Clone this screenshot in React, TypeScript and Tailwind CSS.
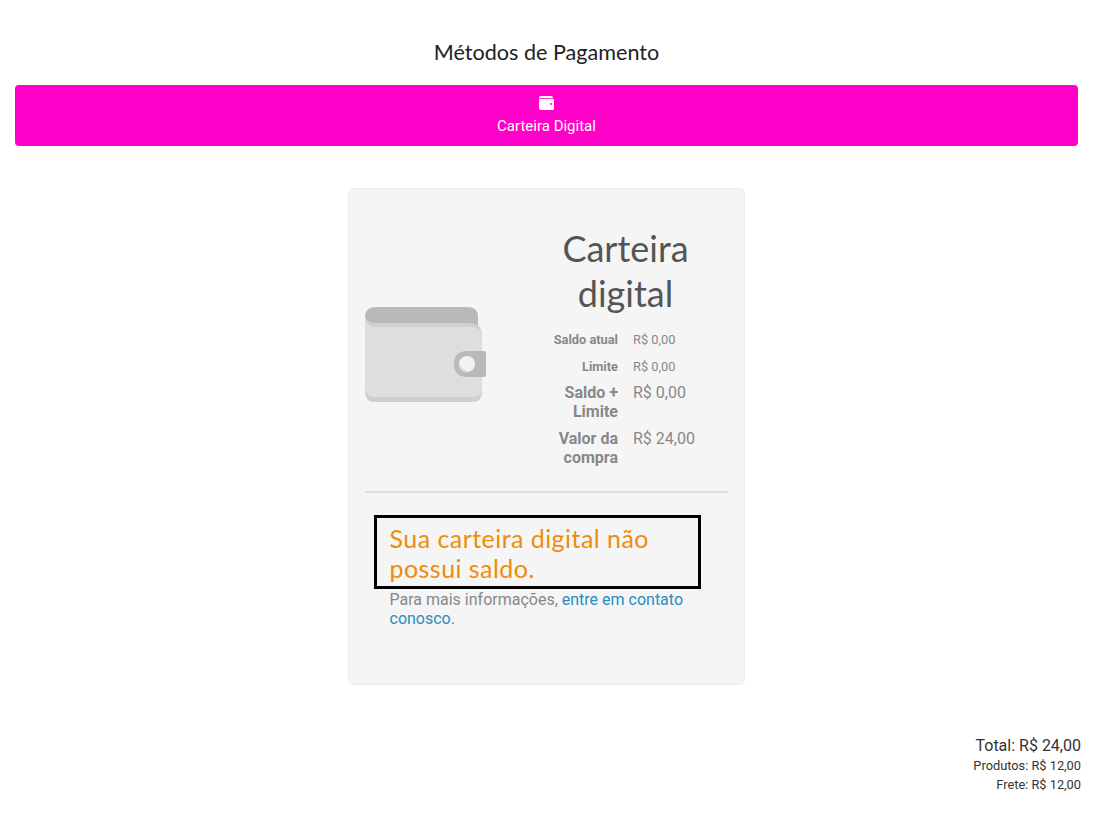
import React from "react";

const head = "font-['Lato','Noto_Sans',sans-serif]";

function Wallet() {
  return (
    <svg width="122" height="97" viewBox="0 0 122 97" className="block">
      <path d="M0 12 Q0 1 11 1 H103 Q113 1 113 11 V36 H0 Z" fill="#b9b9b9" />
      <path d="M0 10 Q1 17 12 17 H104 Q117 17 117 30 V86 Q117 96 107 96 H10 Q0 96 0 86 Z" fill="#cfcfcf" />
      <path d="M0 11 Q2 21 12 21 H106 Q117 21 117 32 V81 Q117 91 107 91 H10 Q0 91 0 81 Z" fill="#dedede" />
      <path d="M103 45 H119 Q121 45 121 47 V69 Q121 71 119 71 H103 Q89 71 89 58 Q89 45 103 45 Z" fill="#b9b9b9" />
      <circle cx="102" cy="58" r="8" fill="#f2f2f2" />
      <path d="M95 54 A8 8 0 0 0 106 65 A9.5 9.5 0 0 1 95 54 Z" fill="#e0e0e0" />
    </svg>
  );
}

function Row({ label, value, small }: { label: React.ReactNode; value: string; small?: boolean }) {
  return (
    <div className="flex">
      <div className={`w-[90px] shrink-0 text-right font-bold ${small ? "text-[12.8px] leading-[17px]" : "text-[16px] leading-[19px]"}`}>{label}</div>
      <div className={`ml-[15px] ${small ? "text-[12.8px] leading-[17px]" : "text-[16px] leading-[19px]"}`}>{value}</div>
    </div>
  );
}

export default function App() {
  return (
    <div className="relative h-[815px] w-[1101px] overflow-hidden bg-white font-['Roboto',sans-serif]">
      <h1 className={`${head} ml-[15px] w-[1063px] pt-[39px] text-center text-[21.6px] leading-[26px] text-[#222]`}>Métodos de Pagamento</h1>
      <div className="ml-[15px] mt-[20px] flex h-[61px] w-[1063px] flex-col items-center rounded-[4px] bg-[#ff00c8] pt-[11px] text-white">
        <svg width="15" height="14" viewBox="0 0 15 14" className="block">
          <path d="M0 2 Q0 0 2 0 H12 Q14 0 14 2 H2 Q0.6 2 0 2.8 Z" fill="#fff" />
          <path d="M0 3.5 Q0.6 2.8 2 2.8 H13.5 Q15 2.8 15 4.3 V12.5 Q15 14 13.5 14 H2 Q0 14 0 12 Z" fill="#fff" />
          <circle cx="12" cy="8" r="1" fill="#ff00c8" />
        </svg>
        <div className="mt-[6px] text-[15px] leading-[20px]">Carteira Digital</div>
      </div>
      <div className="ml-[348px] mt-[42px] h-[497px] w-[397px] rounded-[6px] border border-[#ececec] bg-[#f5f5f5] px-[16px]">
        <div className="flex h-[304px] items-start border-b-2 border-[#dfdfdf]">
          <div className="mt-[117px] w-[122px] shrink-0"><Wallet /></div>
          <div className="ml-[41px] w-[195px] text-[#888]">
            <h2 className={`${head} mt-[37px] text-center text-[36px] leading-[45px] text-[#555]`}>Carteira<br />digital</h2>
            <div className="mt-[15px]">
              <Row small label="Saldo atual" value="R$ 0,00" />
              <div className="mt-[10px]"><Row small label="Limite" value="R$ 0,00" /></div>
              <div className="mt-[8px]"><Row label={<>Saldo +<br />Limite</>} value="R$ 0,00" /></div>
              <div className="mt-[8px]"><Row label={<>Valor da<br />compra</>} value="R$ 24,00" /></div>
            </div>
          </div>
        </div>
        <div className="mt-[22px] ml-[9px] h-[74px] w-[327px] border-[3px] border-black pl-[12.5px] pt-[5px]">
          <div className={`${head} text-[25px] leading-[30px] tracking-[0.45px] text-[#ee8c0c]`}>Sua carteira digital não possui saldo.</div>
        </div>
        <p className="ml-[24.5px] mt-[1px] w-[310px] text-[16px] leading-[19px] text-[#888]">
          Para mais informações, <span className="text-[#2b8cbe]">entre em contato conosco.</span>
        </p>
      </div>
      <div className="mr-[20px] mt-[51px] text-right text-[#333]">
        <div className="text-[16px] leading-[20px]">Total: R$ 24,00</div>
        <div className="text-[12.8px] leading-[19px]">Produtos: R$ 12,00</div>
        <div className="text-[12.8px] leading-[19px]">Frete: R$ 12,00</div>
      </div>
    </div>
  );
}
